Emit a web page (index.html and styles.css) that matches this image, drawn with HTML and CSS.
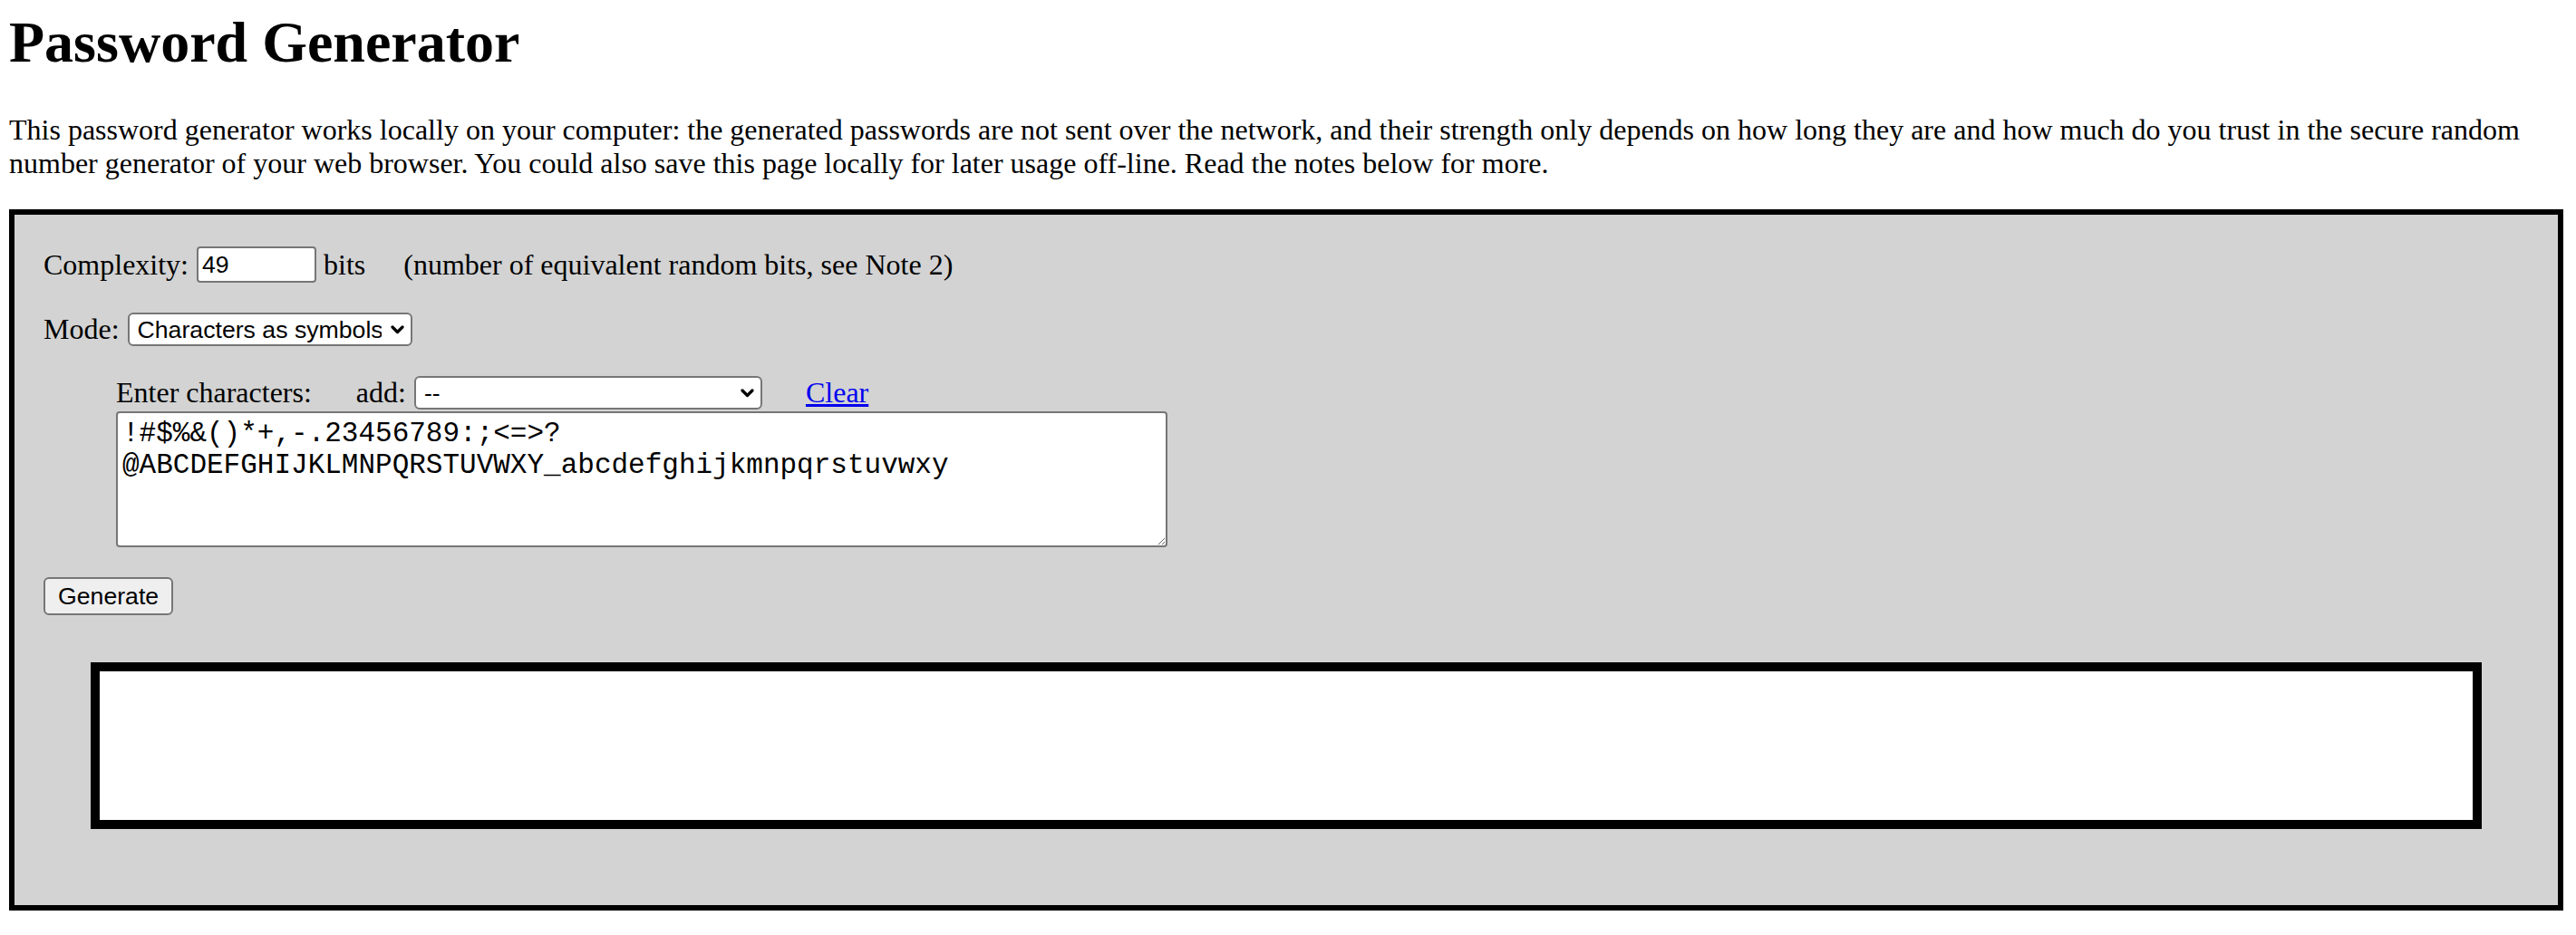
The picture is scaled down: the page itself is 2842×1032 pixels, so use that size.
FILE: index.html
```html
<!DOCTYPE html>
<html lang="en">
<head>
<meta charset="utf-8">
<title>Password Generator</title>
<link rel="stylesheet" href="styles.css">
</head>
<body>
<h1 class="title">Password Generator</h1>
<p class="intro">This password generator works locally on your computer: the generated passwords are not sent over the network, and their strength only depends on how long they are and how much do you trust in the secure random number generator of your web browser. You could also save this page locally for later usage off-line. Read the notes below for more.</p>
<div class="panel">
  <div class="row row-complexity">
    <span class="label">Complexity:</span>
    <input class="bits-input" type="text" value="49">
    <span class="bits-unit">bits</span>
    <span class="note">(number of equivalent random bits, see Note 2)</span>
  </div>
  <div class="row row-mode">
    <span class="label">Mode:</span>
    <span class="select-wrap mode-wrap">
      <select class="select mode-select"><option>Characters as symbols</option></select>
      <svg class="chev" width="15" height="10" viewBox="0 0 15 10" aria-hidden="true"><path d="M2 2 L7.5 7.5 L13 2" fill="none" stroke="#000" stroke-width="3.2" stroke-linejoin="round" stroke-linecap="round"/></svg>
    </span>
  </div>
  <div class="chars">
    <div class="row row-chars">
      <span class="label">Enter characters:</span>
      <span class="add-label">add:</span>
      <span class="select-wrap add-wrap">
        <select class="select add-select"><option>--</option></select>
        <svg class="chev" width="15" height="10" viewBox="0 0 15 10" aria-hidden="true"><path d="M2 2 L7.5 7.5 L13 2" fill="none" stroke="#000" stroke-width="3.2" stroke-linejoin="round" stroke-linecap="round"/></svg>
      </span>
      <a class="clear" href="#">Clear</a>
    </div>
    <textarea class="charset" spellcheck="false">!#$%&amp;()*+,-.23456789:;&lt;=&gt;?@ABCDEFGHIJKLMNPQRSTUVWXY_abcdefghijkmnpqrstuvwxy</textarea>
  </div>
  <button class="generate" type="button">Generate</button>
  <div class="output"></div>
</div>
</body>
</html>
```
FILE: styles.css
```css
html, body {
  background: #ffffff;
}

body {
  margin: 10px 14px 0 10px;
  font-family: "Liberation Serif", "Times New Roman", serif;
  font-size: 32px;
  color: #000000;
}

.title {
  margin: 0 0 41px 0;
  font-size: 64px;
  font-weight: bold;
  line-height: normal;
}

.intro {
  margin: 0 0 32px 0;
  line-height: normal;
}

.panel {
  display: flex;
  flex-direction: column;
  align-items: flex-start;
  border: 6px solid #000000;
  background: #d3d3d3;
  padding: 35px 32px 84px 32px;
}

.row {
  display: flex;
  align-items: center;
  white-space: nowrap;
}

.row-complexity {
  height: 40px;
}

.row-mode {
  height: 37px;
  margin-top: 33px;
}

.chars {
  margin-top: 33px;
  margin-left: 80px;
  display: flex;
  flex-direction: column;
  align-items: flex-start;
}

.row-chars {
  height: 37px;
}

.bits-input {
  box-sizing: border-box;
  width: 132px;
  height: 40px;
  margin: 0 0 0 9px;
  padding: 0 4px;
  border: 2px solid #767676;
  border-radius: 4px;
  background: #ffffff;
  font-family: "Liberation Sans", Arial, sans-serif;
  font-size: 26.67px;
  color: #000000;
}

.bits-unit {
  margin-left: 8px;
}

.note {
  margin-left: 42px;
}

.select-wrap {
  position: relative;
  display: inline-flex;
}

.mode-wrap {
  margin-left: 9px;
}

.add-wrap {
  margin-left: 9px;
}

.select {
  -webkit-appearance: none;
  appearance: none;
  box-sizing: border-box;
  height: 37px;
  margin: 0;
  padding: 0 32px 0 9px;
  border: 2px solid #767676;
  border-radius: 6px;
  background: #ffffff;
  font-family: "Liberation Sans", Arial, sans-serif;
  font-size: 26.67px;
  color: #000000;
}

.mode-select {
  width: 314px;
}

.add-select {
  width: 384px;
}

.chev {
  position: absolute;
  top: 14px;
  right: 9px;
  pointer-events: none;
}

.add-label {
  margin-left: 49px;
}

.clear {
  margin-left: 48px;
  color: #0000ee;
  text-decoration: underline;
}

.charset {
  box-sizing: border-box;
  display: block;
  width: 1160px;
  height: 150px;
  margin: 2px 0 0 0;
  padding: 5px 4px 4px 5px;
  border: 2px solid #767676;
  border-radius: 4px;
  background: #ffffff;
  font-family: "Liberation Mono", "Courier New", monospace;
  font-size: 31px;
  line-height: 35px;
  color: #000000;
}

.generate {
  box-sizing: border-box;
  height: 42px;
  margin: 33px 0 0 0;
  padding: 0 14px;
  border: 2px solid #767676;
  border-radius: 6px;
  background: #efefef;
  font-family: "Liberation Sans", Arial, sans-serif;
  font-size: 26.67px;
  color: #000000;
}

.output {
  box-sizing: border-box;
  align-self: stretch;
  height: 184px;
  margin: 52px 52px 0 52px;
  border: 10px solid #000000;
  background: #ffffff;
}
```
